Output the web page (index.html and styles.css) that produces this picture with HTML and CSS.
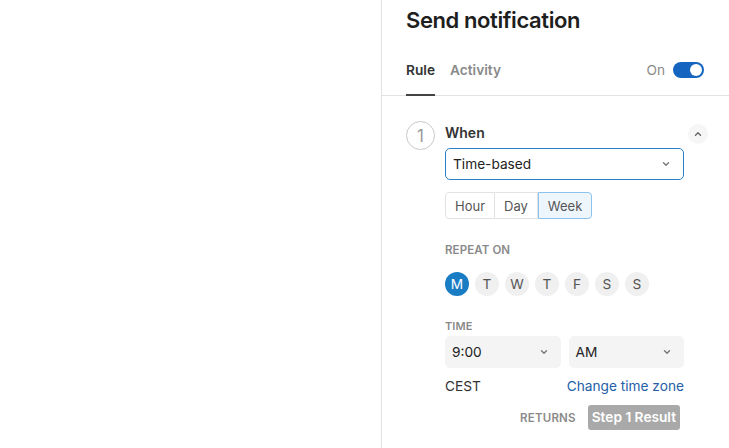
FILE: index.html
```html
<!DOCTYPE html>
<html>
<head>
<meta charset="utf-8">
<link rel="stylesheet" href="styles.css">
</head>
<body>
<div class="page">
  <div class="canvas"></div>
  <aside class="panel">
    <h1 class="title">Send notification</h1>
    <div class="tabs">
      <div class="tab tab-active">Rule</div>
      <div class="tab">Activity</div>
      <div class="tabs-spacer"></div>
      <div class="onoff">
        <span class="onoff-label">On</span>
        <span class="toggle"><span class="knob"></span></span>
      </div>
    </div>
    <div class="step">
      <div class="step-num">1</div>
      <div class="step-body">
        <div class="step-head">
          <div class="step-title">When</div>
          <button class="collapse">
            <svg width="10" height="10" viewBox="0 0 10 10"><path d="M2.5 6.2 L5 3.8 L7.5 6.2" fill="none" stroke="#666" stroke-width="1.4" stroke-linecap="round" stroke-linejoin="round"/></svg>
          </button>
        </div>
        <div class="select select-focus">
          <span>Time-based</span>
          <svg class="chev" width="10" height="10" viewBox="0 0 10 10"><path d="M2.5 3.8 L5 6.2 L7.5 3.8" fill="none" stroke="#777" stroke-width="1.4" stroke-linecap="round" stroke-linejoin="round"/></svg>
        </div>
        <div class="segments">
          <div class="seg">Hour</div>
          <div class="seg">Day</div>
          <div class="seg seg-on">Week</div>
        </div>
        <div class="label label-repeat">REPEAT ON</div>
        <div class="days">
          <span class="day day-on">M</span>
          <span class="day">T</span>
          <span class="day">W</span>
          <span class="day">T</span>
          <span class="day">F</span>
          <span class="day">S</span>
          <span class="day">S</span>
        </div>
        <div class="label label-time">TIME</div>
        <div class="time-row">
          <div class="select select-soft">
            <span>9:00</span>
            <svg class="chev" width="10" height="10" viewBox="0 0 10 10"><path d="M2.5 3.8 L5 6.2 L7.5 3.8" fill="none" stroke="#777" stroke-width="1.4" stroke-linecap="round" stroke-linejoin="round"/></svg>
          </div>
          <div class="select select-soft">
            <span>AM</span>
            <svg class="chev" width="10" height="10" viewBox="0 0 10 10"><path d="M2.5 3.8 L5 6.2 L7.5 3.8" fill="none" stroke="#777" stroke-width="1.4" stroke-linecap="round" stroke-linejoin="round"/></svg>
          </div>
        </div>
        <div class="tz-row">
          <span class="tz">CEST</span>
          <a class="tz-link">Change time zone</a>
        </div>
        <div class="returns">
          <span class="returns-label">RETURNS</span>
          <span class="badge">Step 1 Result</span>
        </div>
      </div>
    </div>
  </aside>
</div>
</body>
</html>
```

FILE: styles.css
```css
* { box-sizing: border-box; }
html, body { margin: 0; padding: 0; background: #fff; }
body {
  font-family: Inter, "Noto Sans", sans-serif;
  color: #222;
  width: 729px;
  height: 448px;
  overflow: hidden;
}
.page { display: flex; height: 448px; }
.canvas { width: 381px; flex: none; }
.panel {
  flex: 1;
  border-left: 1px solid #e2e2e2;
  display: flex;
  flex-direction: column;
}
.title {
  margin: 0;
  padding: 6px 24px 0;
  font-size: 22px;
  line-height: 28px;
  font-weight: 600;
  color: #1e1e1e;
  letter-spacing: -0.4px;
}
.tabs {
  display: flex;
  align-items: flex-start;
  margin-top: 22px;
  padding: 0 25px 0 24px;
  border-bottom: 1px solid #e2e2e2;
  height: 40px;
}
.tab {
  font-size: 13.7px;
  font-weight: 600;
  color: #8a8a8a;
  height: 40px;
  line-height: 28px;
  margin-right: 15px;
  border-bottom: 2px solid transparent;
  margin-bottom: -1px;
}
.tab-active { color: #333; border-bottom-color: #444; }
.tabs-spacer { flex: 1; }
.onoff { display: flex; align-items: center; gap: 8px; height: 28px; }
.onoff-label { font-size: 13.7px; color: #8a8a8a; }
.toggle {
  width: 31px; height: 16px; border-radius: 8px;
  background: #1565c0;
  position: relative;
  display: inline-block;
}
.knob {
  position: absolute; right: 2px; top: 2px;
  width: 12px; height: 12px; border-radius: 50%; background: #fff;
}
.step {
  display: flex;
  gap: 10px;
  padding: 24px 45px 0 24px;
}
.step-num {
  width: 29px; height: 29px; flex: none;
  border: 1px solid #c8c8c8; border-radius: 50%;
  display: flex; align-items: center; justify-content: center;
  font-size: 17px; color: #999; font-weight: 400;
  margin-top: 1px;
}
.step-body { flex: 1; display: flex; flex-direction: column; }
.step-head { display: flex; justify-content: space-between; align-items: center; height: 25px; }
.step-title { font-size: 14px; font-weight: 600; color: #333; }
.collapse {
  width: 20px; height: 20px; border-radius: 50%; border: none;
  background: #f6f6f6; padding: 0; margin-right: -24px; margin-top: 2px;
  display: flex; align-items: center; justify-content: center;
}
.select {
  display: flex; align-items: center; justify-content: space-between;
  height: 32px; padding: 0 12px 0 7px; border-radius: 5px;
  font-size: 13.7px; color: #222;
}
.select-focus { border: 1px solid #2a7fc9; margin-top: 3px; }
.select-soft { background: #f4f4f4; flex: 1; }
.chev { flex: none; }
.segments { display: flex; margin-top: 12px; height: 27px; }
.seg {
  font-size: 13px; color: #555; padding: 0 9px;
  border: 1px solid #e2e2e2; border-left-width: 0;
  display: flex; align-items: center;
}
.seg:first-child { border-left-width: 1px; border-radius: 4px 0 0 4px; }
.seg:last-child { border-radius: 0 4px 4px 0; }
.seg-on { background: #eef6fd; border: 1px solid #8cc2ee; }
.label {
  font-size: 11px; font-weight: 600; color: #8a8a8a; letter-spacing: 0.1px;
  line-height: 14px;
}
.label-repeat { margin-top: 24px; font-size: 11.5px; }
.days { display: flex; gap: 6px; margin-top: 15px; }
.day {
  width: 24px; height: 24px; border-radius: 50%;
  background: #f0f0f0; color: #555; font-size: 13.7px;
  display: flex; align-items: center; justify-content: center;
}
.day-on { background: #1a7dc4; color: #fff; }
.label-time { margin-top: 23px; }
.time-row { display: flex; gap: 8px; margin-top: 3px; }
.tz-row { display: flex; justify-content: space-between; margin-top: 9px; font-size: 13.7px; line-height: 18px; }
.tz { color: #333; }
.tz-link { color: #2360a8; }
.returns { display: flex; justify-content: flex-end; align-items: center; gap: 12px; margin-top: 10px; padding-right: 4px; }
.returns-label { font-size: 11.5px; font-weight: 600; color: #8a8a8a; letter-spacing: 0.2px; }
.badge {
  background: #a9a9a9; color: #fff; font-size: 13.7px; font-weight: 600;
  padding: 0 4px; height: 25px; line-height: 25px; border-radius: 3px;
}
```
